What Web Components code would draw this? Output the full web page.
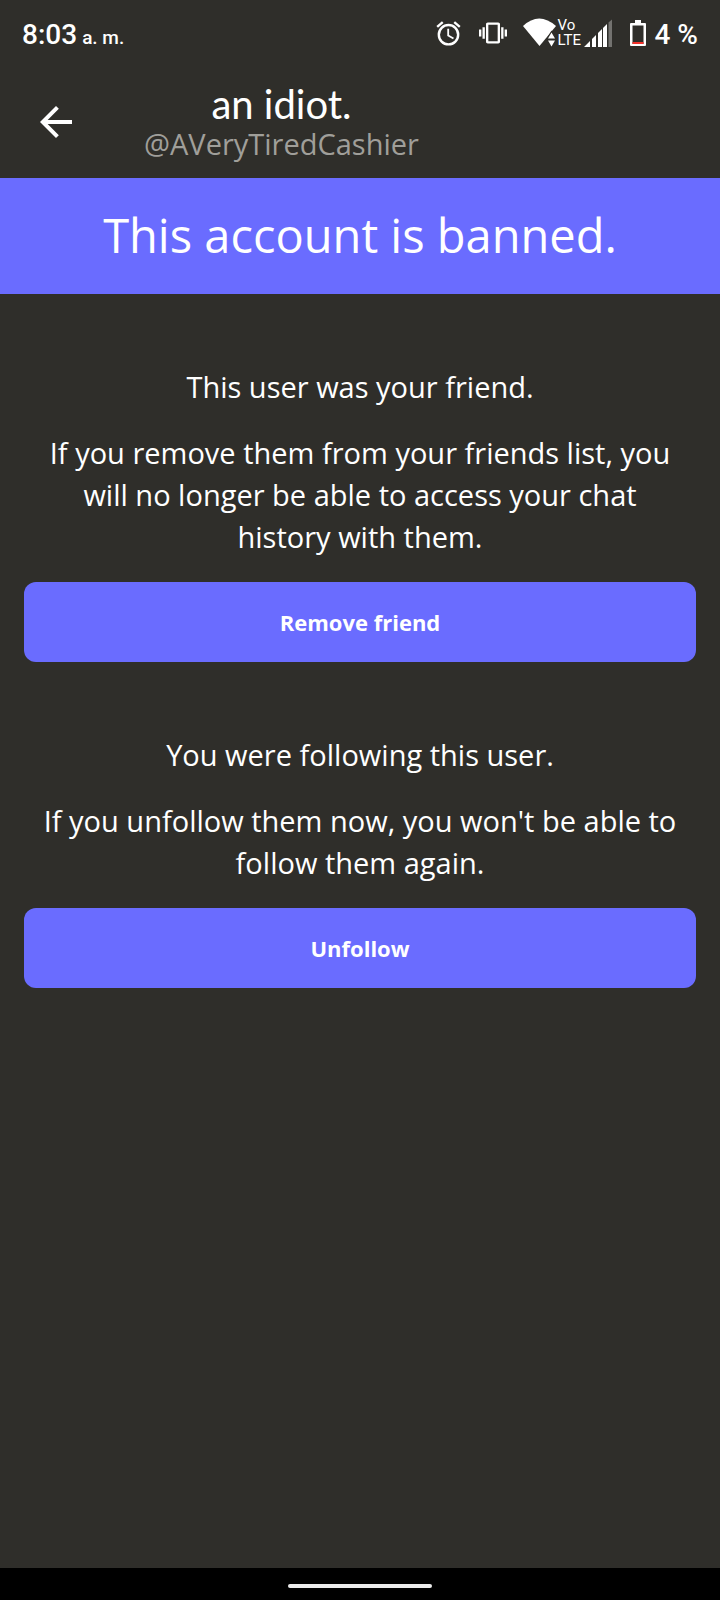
<!DOCTYPE html>
<html lang="en">
<head>
<meta charset="utf-8">
<meta name="viewport" content="width=device-width, initial-scale=1">
<title>Banned account</title>
<style>
  :root {
    --surface: #2f2e2a;
    --accent: #6a6cff;
    --muted: #a09f9a;
    --ui-font: "Open Sans", "Noto Sans", sans-serif;
  }
  body { margin: 0; background: var(--surface); color: #fff; font-family: var(--ui-font); }
</style>
</head>
<body>
<app-screen>
  <status-bar slot="top" time="8:03" period="a. m." battery="4 %"></status-bar>
  <profile-header slot="top">
    <span slot="name">an idiot.</span>
    <span slot="handle">@AVeryTiredCashier</span>
  </profile-header>
  <ban-banner slot="top">This account is banned.</ban-banner>
  <relation-section action="Remove friend">
    <span slot="heading">This user was your friend.</span>
    If you remove them from your friends list, you will no longer be able to access your chat history with them.
  </relation-section>
  <relation-section action="Unfollow">
    <span slot="heading">You were following this user.</span>
    If you unfollow them now, you won't be able to follow them again.
  </relation-section>
  <gesture-bar slot="bottom"></gesture-bar>
</app-screen>

<script>
  const define = (name, html, setup) => customElements.define(name, class extends HTMLElement {
    constructor() {
      super();
      this.attachShadow({ mode: 'open' }).innerHTML = html;
    }
    connectedCallback() {
      if (setup) setup(this, this.shadowRoot);
    }
  });

  define('app-screen', `
    <style>
      :host { display: flex; flex-direction: column; min-height: 100vh; }
      main { flex: 1; display: flex; flex-direction: column; gap: 72px; padding: 72px 24px; }
    </style>
    <slot name="top"></slot>
    <main><slot></slot></main>
    <slot name="bottom"></slot>`);

  define('status-bar', `
    <style>
      :host { display: flex; align-items: center; justify-content: space-between; height: 66px;
              padding: 0 22px; margin-bottom: 4px; font-family: Roboto, sans-serif; font-weight: 500; white-space: nowrap; }
      .clock { display: flex; align-items: baseline; gap: 5px; padding-top: 6px; font-size: 28px; line-height: 36px; }
      .period { font-size: 19px; }
      .icons { display: flex; align-items: center; gap: 16px; }
      .battery { display: flex; align-items: center; gap: 9px; font-size: 28px; line-height: 36px; }
      .level { padding-top: 4px; }
      .network { display: flex; align-items: center; padding-right: 2px; }
      .volte { width: 27px; padding-left: 1px; box-sizing: border-box; font-size: 15px; line-height: 15px; font-weight: 400; }
      .volte span { display: block; }
      svg { display: block; fill: #fff; }
    </style>
    <div class="clock"><span class="time"></span><span class="period"></span></div>
    <div class="icons">
      <svg width="29" height="29" viewBox="0 0 24 24" aria-hidden="true"><path d="M22 5.72l-4.600-3.860-1.290 1.530 4.600 3.860L22 5.720zM7.880 3.390L6.600 1.860 2 5.710l1.290 1.530 4.590-3.850zM12.500 8H11v6l4.750 2.850.75-1.230-4-2.370V8zM12 4a9 9 0 1 0 0 18 9 9 0 0 0 0-18zm0 16a7 7 0 1 1 0-14 7 7 0 0 1 0 14z"/></svg>
      <svg width="28" height="28" viewBox="0 0 24 24" aria-hidden="true"><path d="M0 15h2V9H0v6zm3 2h2V7H3v10zm19-8v6h2V9h-2zm-3 8h2V7h-2v10zM16.500 3h-9C6.670 3 6 3.670 6 4.500v15c0 .83.67 1.500 1.500 1.500h9c.83 0 1.500-.67 1.500-1.500v-15c0-.83-.67-1.500-1.500-1.500zM16 19H8V5h8v14z"/></svg>
      <div class="network">
        <svg width="34" height="30" viewBox="0 0 34 30" aria-hidden="true"><path d="M0 8Q16-7 33 8L16.500 28Z"/><path d="M25 20.500L28.500 14.500L32 20.500ZM25 22.500H32L28.500 28.500Z" stroke="#2f2e2a" stroke-width="2" paint-order="stroke"/></svg>
        <div class="volte"><span>Vo</span><span>LTE</span></div>
        <svg width="28" height="30" viewBox="0 0 28 30" aria-hidden="true"><path d="M0 29L6 23V29ZM8 21L12 17V29H8ZM14 15L18 11V29H14ZM19 10L23 6V29H19Z"/><path d="M24.500 4.500L28.500 1V29H24.500Z" fill="#73726f"/></svg>
      </div>
      <div class="battery">
        <svg width="16" height="27" viewBox="0 0 16 27" aria-hidden="true"><path fill-rule="evenodd" d="M5 0H11V3H15Q16 3 16 4V25Q16 26 15 26H1Q0 26 0 25V4Q0 3 1 3H5ZM2.500 5.500V24H13.500V5.500Z"/><path d="M2.500 22H13.500V24H2.500Z" fill="#f3322b"/></svg>
        <span class="level"></span>
      </div>
    </div>`, (el, root) => {
      root.querySelector('.time').textContent = el.getAttribute('time');
      root.querySelector('.period').textContent = el.getAttribute('period');
      root.querySelector('.level').textContent = el.getAttribute('battery');
    });

  define('profile-header', `
    <style>
      :host { display: flex; align-items: center; gap: 64px; padding: 12px 32px 16px; }
      button { display: block; padding: 0; border: 0; background: none; cursor: pointer; }
      svg { display: block; fill: #fff; }
      .title { text-align: center; min-width: 0; }
      h1 { margin: 0; font: 400 40px/44px Lato, sans-serif; }
      p { margin: 0; font-size: 29px; line-height: 36px; color: var(--muted); }
    </style>
    <button type="button" aria-label="Back">
      <svg width="48" height="48" viewBox="0 0 24 24" aria-hidden="true"><path d="M20 11H7.830l5.590-5.590L12 4l-8 8 8 8 1.410-1.410L7.830 13H20v-2z"/></svg>
    </button>
    <div class="title"><h1><slot name="name"></slot></h1><p><slot name="handle"></slot></p></div>`);

  define('ban-banner', `
    <style>
      :host { display: block; padding: 25px 24px 27px; background: var(--accent); text-align: center; }
      h2 { margin: 0; font-weight: 400; font-size: 47px; line-height: 64px; }
    </style>
    <h2><slot></slot></h2>`);

  define('relation-section', `
    <style>
      :host { display: flex; flex-direction: column; gap: 24px; text-align: center; font-size: 29px; line-height: 42px; }
      h3, p { margin: 0; padding: 0 12px; font-weight: 400; font-size: inherit; }
      button { height: 80px; border: 0; border-radius: 12px; background: var(--accent); color: #fff;
               font: 700 22px/32px var(--ui-font); cursor: pointer; }
    </style>
    <h3><slot name="heading"></slot></h3>
    <p><slot></slot></p>
    <button type="button"></button>`, (el, root) => {
      root.querySelector('button').textContent = el.getAttribute('action');
    });

  define('gesture-bar', `
    <style>
      :host { display: flex; justify-content: center; padding: 16px 0 12px; background: #000; }
      div { width: 20%; height: 4px; border-radius: 2px; background: #ececec; }
    </style>
    <div></div>`);
</script>
</body>
</html>
